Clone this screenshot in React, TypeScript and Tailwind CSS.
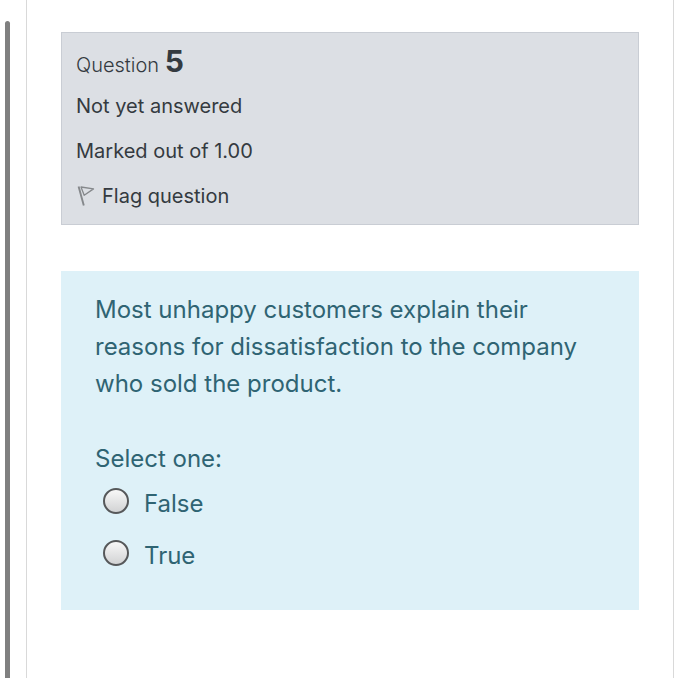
import React, { useState } from 'react'

interface Option {
  value: string
  label: string
}

const options: Option[] = [
  { value: '0', label: 'False' },
  { value: '1', label: 'True' },
]

const FlagIcon: React.FC = () => (
  <svg
    aria-hidden="true"
    className="w-5 h-6 shrink-0"
    viewBox="0 0 20 24"
    fill="none"
    stroke="#85888b"
    strokeLinejoin="round"
  >
    <path d="M2.6 2.5 7.8 21.5" strokeWidth="1.9" />
    <path d="M5 3 17.5 4.9 8.2 11.3Z" strokeWidth="1.3" />
  </svg>
)

const QuestionInfo: React.FC = () => (
  <section className="px-3.5 pt-3 pb-3.5 bg-[#dcdfe4] border border-[#c9cdd4] text-xl leading-7 text-[#343a40]">
    <h3 className="font-light leading-8">
      Question <span className="text-3xl leading-8 font-bold">5</span>
    </h3>
    <div className="flex flex-col gap-[17px] mt-[11px]">
      <div>Not yet answered</div>
      <div>Marked out of 1.00</div>
      <button className="flex items-center gap-1.5 self-start cursor-pointer" type="button">
        <FlagIcon />
        Flag question
      </button>
    </div>
  </section>
)

const QuestionBody: React.FC = () => {
  const [answer, setAnswer] = useState<string | null>(null)

  return (
    <section className="px-[34px] pt-5 pb-9 bg-[#def1f8] text-2xl leading-[37px] text-[#2f6473]">
      <p>
        Most unhappy customers explain their reasons for dissatisfaction to the company who sold
        the product.
      </p>
      <fieldset className="mt-[38px]">
        <legend>Select one:</legend>
        <div className="flex flex-col gap-[15px] mt-2 pl-2">
          {options.map((option) => (
            <label key={option.value} className="flex items-center gap-[15px]">
              <input
                className="appearance-none size-[26px] mb-1.5 rounded-full border-2 border-[#56585a] bg-linear-to-b from-[#f8f8f8] to-[#d2d3d4] checked:to-[#56585a]"
                type="radio"
                name="answer"
                value={option.value}
                checked={answer === option.value}
                onChange={() => setAnswer(option.value)}
              />
              {option.label}
            </label>
          ))}
        </div>
      </fieldset>
    </section>
  )
}

const App: React.FC = () => {
  return (
    <div className="flex min-h-screen bg-white font-[Inter,sans-serif]">
      <div className="w-[5px] shrink-0 ml-[5px] mt-[21px] rounded-t-full bg-[#808080]" />
      <main className="flex flex-col flex-1 gap-[46px] ml-4 mr-[26px] px-[34px] pt-8 pb-16 border-x border-[#d9d9d9]">
        <QuestionInfo />
        <QuestionBody />
      </main>
    </div>
  )
}

export default App
